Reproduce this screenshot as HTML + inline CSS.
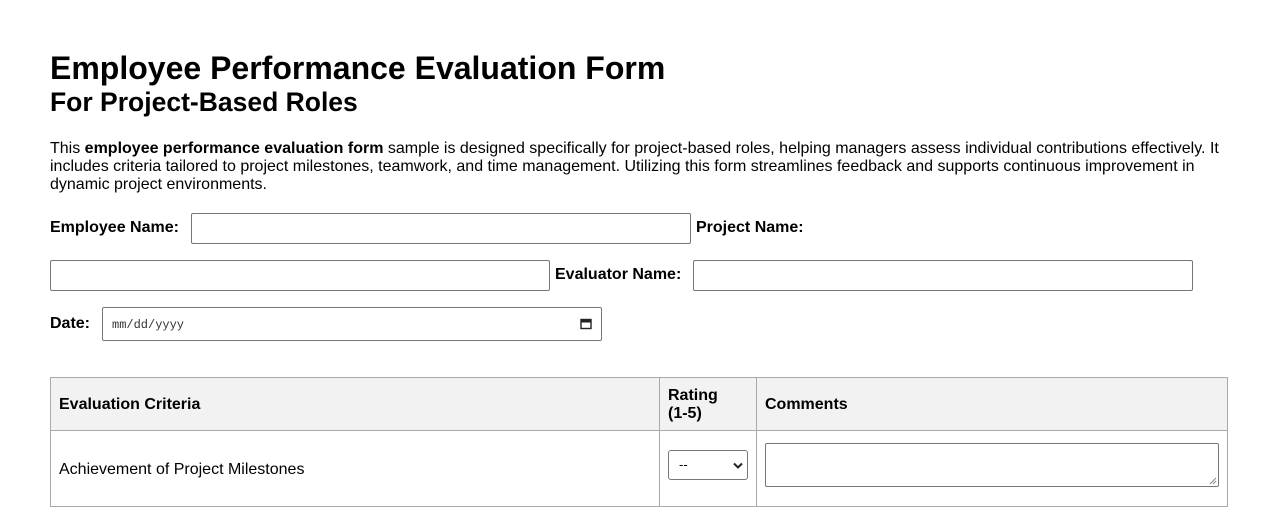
<!DOCTYPE html>
<html><head><style>
body{margin:0;background:#fff;font-family:"Liberation Sans",Arial,sans-serif;color:#000;width:1278px;height:501px;overflow:hidden;position:relative}
.a{position:absolute;white-space:nowrap}
h1,h2{margin:0;font-weight:bold}
.in{position:absolute;box-sizing:border-box;border:1px solid #767676;border-radius:2px;background:#fff}
.lbl{position:absolute;font-weight:bold;font-size:16px}
table{position:absolute;left:50px;top:377px;width:1178px;border-collapse:collapse}
td,th{border:1px solid #aaa;font-size:16px;text-align:left;padding:0 8px}
th{background:#f2f2f2;height:52px}
.s{position:relative;top:1px;display:inline-block}
</style></head><body>
<h1 class="a" style="left:50px;top:50px;font-size:32px">Employee Performance Evaluation Form</h1>
<h2 class="a" style="left:50px;top:87px;font-size:26.5px">For Project-Based Roles</h2>
<div class="a" style="left:50px;top:140px;width:1180px;white-space:normal;font-size:16px;line-height:18px">This <b>employee performance evaluation form</b> sample is designed specifically for project-based roles, helping managers assess individual contributions effectively. It includes criteria tailored to project milestones, teamwork, and time management. Utilizing this form streamlines feedback and supports continuous improvement in dynamic project environments.</div>
<div class="lbl" style="left:50px;top:219px">Employee Name:</div>
<div class="in" style="left:191px;top:213px;width:500px;height:31px"></div>
<div class="lbl" style="left:696px;top:219px">Project Name:</div>
<div class="in" style="left:50px;top:260px;width:500px;height:31px"></div>
<div class="lbl" style="left:555px;top:266px">Evaluator Name:</div>
<div class="in" style="left:693px;top:260px;width:500px;height:31px"></div>
<div class="lbl" style="left:50px;top:315px">Date:</div>
<div class="in" style="left:102px;top:307px;width:500px;height:34px"><span class="a" style="left:9px;top:10px;font-family:'Liberation Mono',monospace;font-size:12px;color:#333">mm/dd/yyyy</span>
<svg class="a" style="left:477px;top:10px" width="12" height="12" viewBox="0 0 12 12"><rect x="1" y="1.5" width="10" height="9" fill="none" stroke="#222" stroke-width="1.4"/><rect x="1" y="1.5" width="10" height="3" fill="#222"/></svg></div>
<table>
<tr><th style="width:592px"><span class="s">Evaluation Criteria</span></th><th style="width:80px;line-height:18px"><span class="s">Rating<br>(1-5)</span></th><th><span class="s">Comments</span></th></tr>
<tr><td style="height:75px"><span class="s">Achievement of Project Milestones</span></td><td></td><td></td></tr>
</table>
<div class="in" style="left:668px;top:450px;width:80px;height:30px;border-radius:3px"><span class="a" style="left:10px;top:6px;font-size:13px">--</span>
<svg class="a" style="left:64px;top:11px" width="10" height="7" viewBox="0 0 10 7"><path d="M1 1.5L5 5.5L9 1.5" fill="none" stroke="#222" stroke-width="2"/></svg></div>
<div class="in" style="left:765px;top:443px;width:454px;height:44px"><svg class="a" style="left:443px;top:33px" width="8" height="8"><path d="M1 7L7 1M4 7L7 4" stroke="#888"/></svg></div>
</body></html>
